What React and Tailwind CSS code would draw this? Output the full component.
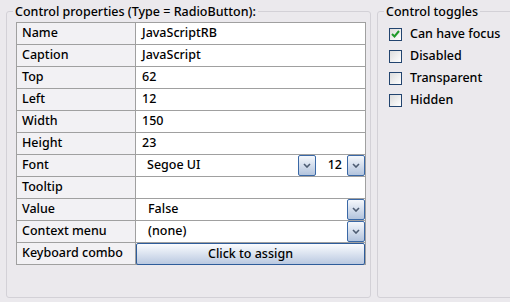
const rows = [
  { label: "Name", value: "JavaScriptRB" },
  { label: "Caption", value: "JavaScript" },
  { label: "Top", value: "62" },
  { label: "Left", value: "12" },
  { label: "Width", value: "150" },
  { label: "Height", value: "23" },
  { label: "Font", kind: "font" },
  { label: "Tooltip", value: "" },
  { label: "Value", kind: "select", value: "False" },
  { label: "Context menu", kind: "select", value: "(none)" },
  { label: "Keyboard combo", kind: "button", value: "Click to assign" },
];

const toggles = [
  { label: "Can have focus", checked: true },
  { label: "Disabled" },
  { label: "Transparent" },
  { label: "Hidden" },
];

function DropButton() {
  return (
    <div className="w-[18px] h-[21px] shrink-0 rounded-[2px] border border-[#3a68a6] bg-linear-to-b from-[#f5f8fc] to-[#b3c4dd] flex items-center justify-center">
      <svg width="8" height="5" viewBox="0 0 8 5">
        <path d="M1 1 L4 4 L7 1" fill="none" stroke="#4d5c72" strokeWidth="1.6" />
      </svg>
    </div>
  );
}

function ValueCell({ row }) {
  if (row.kind === "font") {
    return (
      <div className="flex items-center h-full">
        <span className="flex-1 pl-[11px]">Segoe UI</span>
        <DropButton />
        <span className="w-[31px] text-right pr-[5px]">12</span>
        <DropButton />
      </div>
    );
  }
  if (row.kind === "select") {
    return (
      <div className="flex items-center h-full">
        <span className="flex-1 pl-[12px]">{row.value}</span>
        <DropButton />
      </div>
    );
  }
  if (row.kind === "button") {
    return (
      <div className="h-[22px] -mb-px rounded-[2px] border border-[#2e5c9a] bg-linear-to-b from-[#fbfcfe] to-[#bac9e0] flex items-center justify-center">
        Click to assign
      </div>
    );
  }
  return <div className="pl-[6px] h-full flex items-center">{row.value}</div>;
}

function CheckBox({ checked }) {
  return (
    <div className="w-[13px] h-[13px] shrink-0 border border-[#22446f] bg-linear-to-br from-[#dcdcdc] to-[#ffffff] flex items-center justify-center">
      {checked && (
        <svg width="9" height="8" viewBox="0 0 9 8">
          <path d="M1 4 L3.5 6.5 L8 1" fill="none" stroke="#1f9a2a" strokeWidth="2" />
        </svg>
      )}
    </div>
  );
}

export default function App() {
  return (
    <div
      className="w-[510px] h-[302px] bg-[#ebe9ed] flex gap-[6px] pl-[6px] pt-[3px] overflow-hidden text-[12.5px] font-[500] text-black"
      style={{ fontFamily: '"Noto Sans", "Open Sans", sans-serif' }}
    >
      <fieldset className="w-[365px] shrink-0 h-[295px] border border-[#d3d1d7] rounded-[3px] pl-[9px] pr-[4px]">
        <legend className="-ml-[3px] px-[2px] leading-[17px]">Control properties (Type = RadioButton):</legend>
        <div className="mt-[2px] border-t border-l border-[#a0a0a0]">
          {rows.map((row) => (
            <div key={row.label} className="flex h-[22px]">
              <div className="w-[119px] shrink-0 bg-[#f2f1f4] border-r border-b border-[#a0a0a0] pl-[5px] flex items-center">
                {row.label}
              </div>
              <div className="flex-1 bg-white border-r border-b border-[#a0a0a0]">
                <ValueCell row={row} />
              </div>
            </div>
          ))}
        </div>
      </fieldset>
      <fieldset className="w-[150px] shrink-0 h-[295px] border border-[#d3d1d7] rounded-[3px] pl-[11px]">
        <legend className="-ml-[5px] px-[2px] leading-[17px]">Control toggles</legend>
        <div className="mt-[3px] flex flex-col">
          {toggles.map((t) => (
            <div key={t.label} className="flex items-center gap-[8px] h-[22px]">
              <CheckBox checked={t.checked} />
              <span>{t.label}</span>
            </div>
          ))}
        </div>
      </fieldset>
    </div>
  );
}
